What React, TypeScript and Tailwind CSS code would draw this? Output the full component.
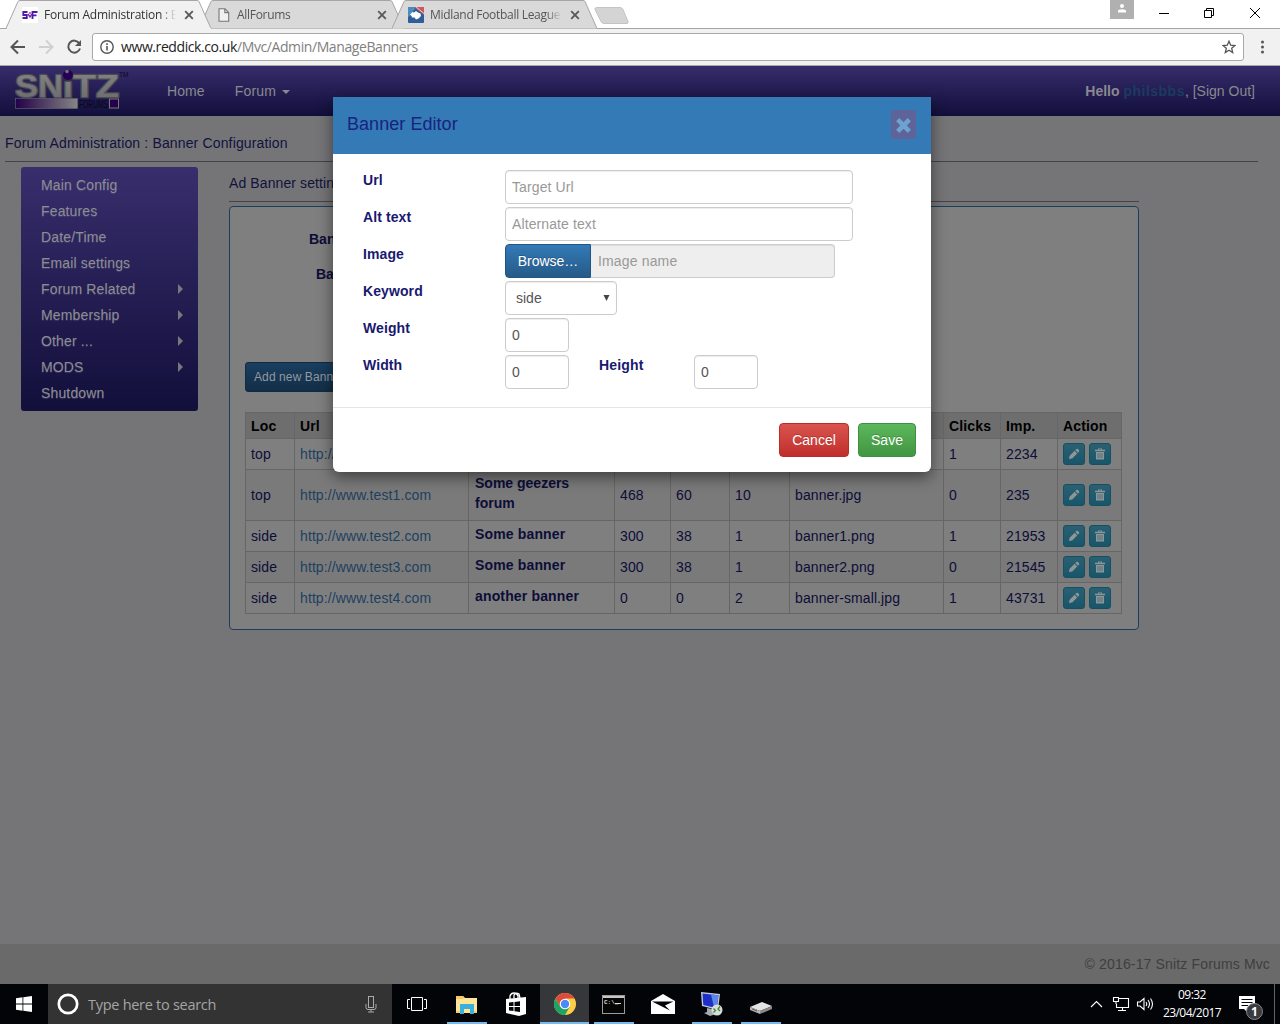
import React from "react";

const ARIAL = "font-['Liberation_Sans',sans-serif]";
const SEGOE = "font-['Open_Sans','Noto_Sans',sans-serif]";

function Tab({ active, title, titleClass, children }: { active?: boolean; title: string; titleClass: string; children: React.ReactNode }) {
  return (
    <div className={`relative h-[29px] w-[206px] shrink-0 -mr-[13px] ${active ? "z-30" : "z-10"}`}>
      <svg className="absolute inset-0" width="206" height="29" viewBox="0 0 206 29">
        <path d="M0 28.5 L12 1.5 Q13 .5 14 .5 H191 Q192 .5 193 1.5 L205 28.5" fill={active ? "#f2f1f2" : "#d9d9d9"} stroke="#a6a6a6" />
        {active && <path d="M1 28.5H205" stroke="#f2f1f2" strokeWidth="1.4" />}
      </svg>
      <div className="relative flex h-[29px] items-center pl-4">
        <div className="flex w-[22px] shrink-0 items-center">{children}</div>
        <div className={`h-[18px] w-[132px] overflow-hidden text-[12px] leading-[18px] whitespace-nowrap [mask-image:linear-gradient(to_right,black_88%,transparent)] ${SEGOE} ${titleClass}`}>{title}</div>
        <svg className="ml-2" width="10" height="10" viewBox="0 0 10 10">
          <path d="M1.200 1.200L8.800 8.800M8.800 1.200L1.200 8.800" stroke="#5a5a5a" strokeWidth="1.9" />
        </svg>
      </div>
    </div>
  );
}

function BrowserChrome() {
  return (
    <div className="h-[66px] shrink-0 bg-white">
      <div className="flex h-[29px] border-b border-[#a6a6a6] pl-[6px]">
        <Tab active title="Forum Administration : B" titleClass="text-[#333] tracking-[-0.24px]">
          <svg className="bg-white" width="16" height="16" viewBox="0 0 16 16" fill="none" stroke="#4a1aa8" strokeWidth="1.800">
            <path d="M5.500 5H1.300V8H4.800V11H.5M10.500 12V5H15.500M10.500 8.300H14.500" />
            <path d="M6 7L8 10L10 7" stroke="#7a2fc0" strokeWidth="1.500" />
            <circle cx="8" cy="6" r="1" fill="#d03a80" stroke="none" />
          </svg>
        </Tab>
        <Tab title="AllForums" titleClass="text-[#555] tracking-[-0.3px]">
          <svg className="ml-[3px]" width="12" height="14" viewBox="0 0 12 14">
            <path d="M1 .7H7L10.7 4.4V13.3H1ZM6.8 .7V4.6H10.7" fill="#f0f0f0" stroke="#777" strokeWidth="1.1" />
          </svg>
        </Tab>
        <Tab title="Midland Football League" titleClass="text-[#555] tracking-[-0.3px]">
          <svg width="16" height="16" viewBox="0 0 16 16">
            <rect width="16" height="16" rx="1" fill="#2e5f98" />
            <path d="M0 0H8L2 9L0 10Z" fill="#4b8dbd" />
            <path d="M6 0H16V8Z" fill="#c85a60" />
            <path d="M8 0L16 6.500" stroke="#eac9cb" />
            <path d="M2 7.500L4.500 5L6 5.500L8 4L10 5.500L12.500 6.500L13 9L10.500 11.500L8 12.500L6.500 10.500H4L3.500 9Z" fill="#fff" />
          </svg>
        </Tab>
        <svg className="ml-[9px] mt-[6px]" width="36" height="19" viewBox="0 0 36 19">
          <path d="M2.5 1.5H26Q28 1.5 29 3.5L34 15.5Q34.5 17.5 33 17.5H10Q8 17.5 7 15.5L1 3.5Q.5 1.5 2.5 1.5Z" fill="#d4d4d4" stroke="#c4c4c4" />
        </svg>
        <div className="ml-auto flex">
          <div className="flex h-[19px] w-6 justify-center bg-[#b0b0b0] pt-1">
            <svg width="10" height="9" viewBox="0 0 10 9"><circle cx="5" cy="2" r="2" fill="#fff" /><path d="M1 8.5V7Q1 5.3 5 5.3T9 7V8.5Z" fill="#fff" /></svg>
          </div>
          <svg className="mt-[7px]" width="146" height="14" viewBox="0 0 146 14" fill="none" stroke="#000">
            <path d="M25 6.5H35M70.5 3.500H77.500V10.500H70.500ZM72.500 3.500V1.500H79.500V8.500H77.500M116 1L126 11M126 1L116 11" />
          </svg>
        </div>
      </div>
      <div className="flex h-[37px] items-center border-b border-[#a8a8a8] bg-[#f2f1f2]">
        <svg className="ml-[9px] shrink-0" width="76" height="20" viewBox="0 0 76 20" fill="none" strokeWidth="2">
          <path d="M16 10H3M9 3.5L2.5 10L9 16.5" stroke="#555" />
          <path d="M30 10H43M37 3.5L43.5 10L37 16.5" stroke="#d0d0d0" />
          <path d="M70.3 6.3A6 6 0 1 0 71 11.5" stroke="#555" />
          <path d="M72 3V9H66Z" fill="#555" />
        </svg>
        <div className="ml-[7px] flex h-7 w-[1152px] shrink-0 items-center rounded-[3px] border border-[#a9a9a9] bg-white px-[7px]">
          <svg width="14" height="14" viewBox="0 0 14 14"><circle cx="7" cy="7" r="6.2" fill="none" stroke="#555" strokeWidth="1.4" /><path d="M7 6V10.5M7 3.3V4.9" stroke="#555" strokeWidth="1.6" /></svg>
          <div className={`ml-[7px] text-[14px] leading-5 tracking-[-0.41px] text-[#808080] ${SEGOE}`}><span className="text-[#222]">www.reddick.co.uk</span>/Mvc/Admin/ManageBanners</div>
          <svg className="ml-auto" width="14" height="14" viewBox="0 0 14 14"><path d="M7 1.2L8.7 5.2L13 5.5L9.7 8.3L10.7 12.6L7 10.3L3.3 12.6L4.3 8.3L1 5.5L5.3 5.2Z" fill="none" stroke="#555" strokeWidth="1.3" /></svg>
        </div>
        <svg className="ml-4" width="5" height="14" viewBox="0 0 5 14" fill="#555"><circle cx="2.5" cy="2" r="1.5" /><circle cx="2.5" cy="7" r="1.5" /><circle cx="2.5" cy="12" r="1.5" /></svg>
      </div>
    </div>
  );
}

function SnitzLogo() {
  return (
    <svg className="shrink-0" width="120" height="44" viewBox="0 0 120 44">
      <defs>
        <linearGradient id="bar"><stop stopColor="#230048" /><stop offset="1" stopColor="#858585" /></linearGradient>
        <linearGradient id="metal" x2="0" y2="1"><stop stopColor="#858587" /><stop offset="1" stopColor="#6a6a6e" /></linearGradient>
      </defs>
      <g fontFamily="Liberation Sans" fontWeight="bold" fontSize="32" fill="url(#metal)" stroke="#4c4c52" strokeWidth="2.500" paintOrder="stroke" strokeLinejoin="round">
        <text x="0" y="28" textLength="48" lengthAdjust="spacingAndGlyphs">SN</text>
        <text x="48" y="28" fontSize="28" textLength="10" lengthAdjust="spacingAndGlyphs">ı</text>
        <text x="58" y="28" textLength="46" lengthAdjust="spacingAndGlyphs">TZ</text>
      </g>
      <circle cx="53" cy="6" r="5" fill="#250050" />
      <circle cx="52" cy="2.500" r="1.800" fill="#77707f" />
      <rect x=".5" y="29.500" width="62" height="10" fill="url(#bar)" stroke="#6a6670" strokeWidth=".6" />
      <text x="64" y="39" fontFamily="Liberation Sans" fontSize="10.500" textLength="29" lengthAdjust="spacingAndGlyphs" fill="#08061c">FORUMS</text>
      <rect x="94.500" y="30" width="9" height="9" fill="#26004c" stroke="#777" />
      <text x="104" y="8" fontFamily="Liberation Sans" fontSize="6.500" fill="#0a0820">TM</text>
    </svg>
  );
}

const menu: [string, boolean][] = [
  ["Main Config", false], ["Features", false], ["Date/Time", false], ["Email settings", false],
  ["Forum Related", true], ["Membership", true], ["Other ...", true], ["MODS", true], ["Shutdown", false],
];

const rows = [
  { loc: "top", url: "http://www.test.com", alt: "", w: "", h: "", wt: "", img: "", clicks: "1", imp: "2234", tall: false },
  { loc: "top", url: "http://www.test1.com", alt: "Some geezers forum", w: "468", h: "60", wt: "10", img: "banner.jpg", clicks: "0", imp: "235", tall: true },
  { loc: "side", url: "http://www.test2.com", alt: "Some banner", w: "300", h: "38", wt: "1", img: "banner1.png", clicks: "1", imp: "21953", tall: false },
  { loc: "side", url: "http://www.test3.com", alt: "Some banner", w: "300", h: "38", wt: "1", img: "banner2.png", clicks: "0", imp: "21545", tall: false },
  { loc: "side", url: "http://www.test4.com", alt: "another banner", w: "0", h: "0", wt: "2", img: "banner-small.jpg", clicks: "1", imp: "43731", tall: false },
];

function ActionButton({ kind }: { kind: "edit" | "delete" }) {
  return (
    <div className="flex h-[22px] w-[22px] items-center justify-center rounded-[3px] border border-[#155064] bg-linear-to-b from-[#2a6072] to-[#18566a]">
      <svg width="12" height="12" viewBox="0 0 12 12" fill="#8e9698">
        {kind === "edit" ? (
          <path d="M1 11L1.600 7.800L6.600 2.800L9.200 5.400L4.200 10.400ZM7.300 2.100L8.300 1.100Q9.200 .4 9.900 1.100L10.900 2.100Q11.600 2.800 10.900 3.700L9.900 4.700Z" />
        ) : (
          <path fillRule="evenodd" d="M4 .5H8V1.800H11V3.200H1V1.800H4ZM5 1.200V1.800H7V1.200ZM2 4H10V11.500H2ZM3.700 5V10.300H4.300V5ZM5.700 5V10.300H6.300V5ZM7.700 5V10.300H8.300V5Z" />
        )}
      </svg>
    </div>
  );
}

function BannerTable() {
  const cell = "border border-[#666] pl-[5px] align-middle";
  return (
    <table className="w-[877px] table-fixed border-collapse text-[14px] leading-5 tracking-[0.1px] text-[#0d0d38]">
      <colgroup>
        <col className="w-[49px]" /><col className="w-[174px]" /><col className="w-[146px]" /><col className="w-[56px]" /><col className="w-[59px]" /><col className="w-[60px]" /><col className="w-[154px]" /><col className="w-[57px]" /><col className="w-[57px]" /><col className="w-[64px]" />
      </colgroup>
      <thead>
        <tr className="h-[26px] bg-[#6e6e6e] text-left font-bold text-black">
          {["Loc", "Url", "", "", "", "", "", "Clicks", "Imp.", "Action"].map((h, i) => (
            <th key={i} className={`${cell} tracking-[0.15px] whitespace-nowrap`}>{h}</th>
          ))}
        </tr>
      </thead>
      <tbody>
        {rows.map((r, i) => (
          <tr key={i} className={`${r.tall ? "h-[51px]" : "h-[31px]"} ${i % 2 ? "bg-[#7a7a7a]" : "bg-[#7f7f7f]"}`}>
            <td className={cell}>{r.loc}</td>
            <td className={`${cell} text-[#1d405f]`}>{r.url}</td>
            <td className={`${cell} font-bold`}><div className={`pr-9 pb-1 pl-px ${r.tall ? "tracking-[0]" : "tracking-[0.15px] whitespace-nowrap"}`}>{r.alt}</div></td>
            <td className={cell}>{r.w}</td>
            <td className={cell}>{r.h}</td>
            <td className={cell}>{r.wt}</td>
            <td className={cell}>{r.img}</td>
            <td className={cell}>{r.clicks}</td>
            <td className={cell}>{r.imp}</td>
            <td className={cell}><div className="flex gap-1"><ActionButton kind="edit" /><ActionButton kind="delete" /></div></td>
          </tr>
        ))}
      </tbody>
    </table>
  );
}

const inputBox = "flex h-[34px] items-center rounded-[4px] border border-[#ccc] bg-white px-[6px] text-[14px] shadow-[inset_0_1px_1px_rgba(0,0,0,0.075)]";

function Row({ label, children }: { label: string; children: React.ReactNode }) {
  return (
    <div className="flex h-[37px] items-start">
      <div className="w-[142px] shrink-0 text-[14px] leading-5 font-bold tracking-[0.1px]">{label}</div>
      {children}
    </div>
  );
}

function BannerEditor() {
  return (
    <div className="absolute top-[31px] left-[333px] flex h-[375px] w-[598px] flex-col overflow-visible rounded-b-[6px] bg-white text-[#191970] shadow-[0_5px_15px_rgba(0,0,0,0.5)]">
      <div className="flex h-[57px] items-start justify-between bg-[#337ab7] pr-[15px] pl-[14px]">
        <div className="mt-[14px] text-[18px] leading-[26px] tracking-[0.05px] text-[#1a237e]">Banner Editor</div>
        <div className="mt-[13px] flex h-[29px] w-[25px] items-center justify-center rounded-[3px] bg-[#5e6499]">
          <svg className="mt-[2px]" width="17" height="17" viewBox="0 0 17 17"><path d="M3.600 3.600L13.400 13.400M13.400 3.600L3.600 13.400" stroke="#6da3d0" strokeWidth="5.400" strokeLinecap="square" strokeLinejoin="round" transform="translate(1.300 1.300) scale(.85)" /></svg>
        </div>
      </div>
      <div className="flex h-[253px] flex-col pt-4 pl-[30px]">
        <Row label="Url"><div className={`${inputBox} w-[348px] tracking-[0.1px] text-[#999]`}>Target Url</div></Row>
        <Row label="Alt text"><div className={`${inputBox} w-[348px] tracking-[0.1px] text-[#999]`}>Alternate text</div></Row>
        <Row label="Image">
          <div className="flex h-[34px] w-[86px] items-center justify-center rounded-l-[4px] border border-[#245580] bg-linear-to-b from-[#337ab7] to-[#265a88] text-[14px] text-white [text-shadow:0_-1px_0_rgba(0,0,0,0.2)]">Browse…</div>
          <div className="flex h-[34px] w-[244px] items-center rounded-r-[4px] border border-l-0 border-[#ccc] bg-[#eee] px-[7px] text-[14px] tracking-[0.15px] text-[#999] shadow-[inset_0_1px_1px_rgba(0,0,0,0.075)]">Image name</div>
        </Row>
        <Row label="Keyword">
          <div className={`${inputBox} w-[112px] justify-between pl-[10px] text-[#555]`}>side
            <svg width="7" height="8" viewBox="0 0 7 8"><path d="M.5 1H6.500L3.500 7Z" fill="#444" /></svg>
          </div>
        </Row>
        <Row label="Weight"><div className={`${inputBox} w-16 text-[#555]`}>0</div></Row>
        <Row label="Width">
          <div className={`${inputBox} w-16 text-[#555]`}>0</div>
          <div className="ml-[30px] w-[95px] text-[14px] leading-5 font-bold tracking-[0.15px]">Height</div>
          <div className={`${inputBox} w-16 text-[#555]`}>0</div>
        </Row>
      </div>
      <div className="flex flex-1 justify-end gap-[9px] border-t border-[#e5e5e5] pt-[15px] pr-[15px] text-[14px] text-white [text-shadow:0_-1px_0_rgba(0,0,0,0.2)]">
        <div className="flex h-[34px] w-[70px] items-center justify-center rounded-[4px] border border-[#b92c28] bg-linear-to-b from-[#d9534f] to-[#c12e2a]">Cancel</div>
        <div className="flex h-[34px] w-[58px] items-center justify-center rounded-[4px] border border-[#3e8f3e] bg-linear-to-b from-[#5cb85c] to-[#419641]">Save</div>
      </div>
    </div>
  );
}

function ForumPage() {
  return (
    <div className={`relative flex h-[918px] shrink-0 flex-col bg-[#757578] text-[14px] text-[#12123c] ${ARIAL}`}>
      <div className="flex h-[50px] shrink-0 items-center bg-linear-to-b from-[#372c6b] to-[#120f3c] pr-[25px] pl-[15px] text-[#89898f]">
        <SnitzLogo />
        <div className="ml-8 tracking-[0.1px]">Home</div>
        <div className="ml-[30px] tracking-[0.2px]">Forum</div>
        <svg className="ml-[6px] mt-[2px]" width="8" height="4"><path d="M0 0H8L4 4Z" fill="#89898f" /></svg>
        <div className="ml-auto"><b>Hello</b> <b className="tracking-[0.5px] text-[#1b3b61]">philsbbs</b>, [Sign Out]</div>
      </div>
      <div className="ml-[5px] h-[46px] w-[1253px] shrink-0 border-b border-[#444448] pt-[17px] leading-5 tracking-[0.15px]">Forum Administration : Banner Configuration</div>
      <div className="flex flex-1 items-start pt-[5px]">
        <div className="ml-[21px] h-[244px] w-[177px] rounded-[3px] bg-linear-to-b from-[#392e6d] to-[#120f3b] pt-[5px] pr-[15px] pl-5 tracking-[0.15px] text-[#8c8c92] [text-shadow:0_1px_1px_rgba(120,120,150,0.35)]">
          {menu.map(([name, sub]) => (
            <div key={name} className="flex h-[26px] items-center justify-between">{name}
              {sub && <svg width="5" height="10"><path d="M0 0L5 5L0 10Z" fill="#77777d" /></svg>}
            </div>
          ))}
        </div>
        <div className="ml-[31px] w-[910px]">
          <div className="h-[35px] border-b border-[#444448] pt-[6px] leading-5 tracking-[0.1px]">Ad Banner settings</div>
          <div className="mt-1 h-[424px] rounded-[4px] border border-[#1b3e5d] bg-[#7f7f7f] pl-[15px]">
            <div className="flex h-[155px] flex-col gap-[15px] pt-[22px] text-[14px] leading-5 font-bold text-[#0c0c38]">
              <div className="pl-16">Banner</div>
              <div className="pl-[71px]">Banner</div>
            </div>
            <div className="mb-5 flex h-[30px] w-[120px] items-center rounded-[3px] border border-[#122b40] bg-linear-to-b from-[#1a3f60] to-[#132e47] pl-2 text-[12px] tracking-[0.1px] text-[#93999f]">Add new Banner</div>
            <BannerTable />
          </div>
        </div>
      </div>
      <div className="h-10 shrink-0 bg-[#6a6a6a] pt-[10px] pr-[10px] text-right leading-5 tracking-[0.15px] text-[#3e3e41]">© 2016-17 Snitz Forums Mvc</div>
      <BannerEditor />
    </div>
  );
}

function Task({ line, active, children }: { line?: boolean; active?: boolean; children?: React.ReactNode }) {
  return (
    <div className="flex h-10 w-[49px] shrink-0 flex-col items-center">
      <div className={`flex h-[38px] w-full items-center justify-center pt-[2px] ${active ? "bg-[#35373b]" : ""}`}>{children}</div>
      <div className={`h-[2px] ${active ? "w-full" : "w-10"} ${line ? "bg-[#76b9ed]" : ""}`} />
    </div>
  );
}

function Taskbar() {
  return (
    <div className={`flex h-10 shrink-0 bg-[#020408] text-white ${SEGOE}`}>
      <div className="flex w-12 shrink-0 items-center justify-center">
        <svg width="16" height="16" viewBox="0 0 16 16" fill="#fff"><path d="M0 2.300L6.500 1.300V7.600H0ZM7.300 1.200L16 0V7.600H7.300ZM0 8.400H6.500V14.700L0 13.700ZM7.300 8.400H16V16L7.300 14.800Z" /></svg>
      </div>
      <div className="mr-px flex w-[344px] shrink-0 items-center bg-[#333] pr-[14px] pl-[9px]">
        <svg width="22" height="22" viewBox="0 0 22 22"><circle cx="11" cy="11" r="9.200" fill="none" stroke="#fff" strokeWidth="2.700" /></svg>
        <div className="mt-px ml-[9px] text-[14.500px] tracking-[-0.28px] text-[#a5a5a5]">Type here to search</div>
        <svg className="ml-auto" width="13" height="17" viewBox="0 0 13 17" fill="none" stroke="#aaa"><rect x="3.500" y=".5" width="5" height="11" /><path d="M1 8V11.500Q1 13.500 3 13.500H9Q11 13.500 11 11.500V8M6 13.500V16M3 16H9" /></svg>
      </div>
      <Task><svg className="-ml-[2px]" width="20" height="14" viewBox="0 0 20 14" fill="none" stroke="#fff"><path d="M4.500 .5H15.500V13.500H4.500ZM3 2.500H.5V11.500H3M17 2.500H19.500V11.500H17" /></svg></Task>
      <Task line>
        <svg width="22" height="19" viewBox="0 0 22 19"><path d="M0 1H7L9 3H21V18H0Z" fill="#ffe599" /><path d="M0 1H7L8.500 3L7 4H0Z" fill="#f4cd62" /><path d="M4 9H18V19H14V14H8V19H4Z" fill="#3cb0dc" /><path d="M0 16H4V18H0M18 16H21V18H18Z" fill="#f5cf69" /></svg>
      </Task>
      <Task>
        <svg width="22" height="24" viewBox="0 0 22 24"><path d="M1 7L21 5V22L14 24L1 21Z" fill="#fff" /><path d="M5 8V4Q6 1 9 1T13 4V8M9 6V3Q11 0 14 2L15 6" fill="none" stroke="#fff" strokeWidth="1.300" /><path d="M4 10.500L8.500 10V14H4ZM9.500 10L15 9.200V14H9.500ZM4 15H8.500V19L4 18.500ZM9.500 15H15V20L9.500 19.200Z" fill="#020408" /></svg>
      </Task>
      <Task line active>
        <svg width="22" height="22" viewBox="0 0 22 22"><circle cx="11" cy="11" r="11" fill="#ffce44" /><path d="M1.500 5.500A11 11 0 0 1 20.530 5.500H11L6.240 13.750Z" fill="#dd4b3e" /><path d="M1.470 5.500A11 11 0 0 0 11 22L15.760 13.750H6.240Z" fill="#1da462" /><circle cx="11" cy="11" r="5.300" fill="#fff" /><circle cx="11" cy="11" r="4.200" fill="#4a8af4" /></svg>
      </Task>
      <Task line>
        <svg width="23" height="19" viewBox="0 0 23 19"><rect x=".5" y=".5" width="22" height="18" fill="#050505" stroke="#9a9a9a" /><rect x="1" y="1" width="21" height="2" fill="#c5c5c5" /><text x="2" y="9" fontFamily="Liberation Mono" fontSize="6" fontWeight="bold" fill="#ddd">C:\_</text><path d="M13 8.500H19" stroke="#ddd" /></svg>
      </Task>
      <Task>
        <svg width="24" height="20" viewBox="0 0 24 20"><path d="M0 7L12 0L24 7V20H0Z" fill="#fff" /><path d="M1 7.500H22.500L14 11.500L19 16.500Z" fill="#020408" /></svg>
      </Task>
      <Task line>
        <svg width="24" height="24" viewBox="0 0 24 24"><path d="M1 0L20 2L18 18L2 14Z" fill="#c3ccda" /><path d="M2.500 1.500L18.500 3.200L16.800 16.300L3.300 13Z" fill="#1c30c8" /><path d="M11 2.400L18.500 3.200L16.800 16.300L14 15.600Z" fill="#5d86e6" /><path d="M7 16L12 17V20L16 22L10 24L4 21L7 20Z" fill="#a5aaae" /><circle cx="17" cy="18" r="5.500" fill="#d9ddd9" /><path d="M13.500 16.500L15.500 18.500L13.500 20.500M20 14.500L18 17L20 19" fill="none" stroke="#3a8a3c" strokeWidth="1.300" /></svg>
      </Task>
      <Task line>
        <svg className="mt-2" width="22" height="12" viewBox="0 0 22 12"><path d="M0 5L12 0L22 4L10 9Z" fill="#e4e4e4" /><path d="M0 5L10 9V12L0 8Z" fill="#b5b5b5" /><path d="M10 9L22 4V7L10 12Z" fill="#8a8a8a" /><path d="M2 7L7 9" stroke="#555" /></svg>
      </Task>
      <div className="ml-auto flex items-center">
        <svg width="64" height="18" viewBox="0 0 64 18" fill="none" stroke="#fff" strokeWidth="1.100">
          <path d="M1 12L6.500 6.500L12 12" />
          <path d="M28 3.500H38.500V12.500H26.500V9M32.500 12.500V15.500M28 15.500H36M23.500 2.500H28.500V6.500H23.500ZM26 6.500V9" />
          <path d="M47.500 7H50L54 3.500V14.500L50 11H47.500ZM56 7Q57.500 9 56 11M58 5Q61 9 58 13M60.500 3.500Q64.500 9 60.500 14.500" />
        </svg>
        <div className="ml-[8px] flex w-[60px] flex-col items-center text-[12px] leading-[18px] tracking-[-0.55px] whitespace-nowrap"><span>09:32</span><span>23/04/2017</span></div>
        <svg className="mt-[7px] ml-[17px]" width="26" height="27" viewBox="0 0 26 27"><path d="M0 2H16V15H9V19L5 15H0Z" fill="#fff" /><path d="M2.500 5.500H13.500M2.500 8.500H13.500M2.500 11.500H9" stroke="#020408" /><circle cx="15.500" cy="17.500" r="8" fill="#3a3b3e" stroke="#85878a" /><text x="15.500" y="22" textAnchor="middle" fontFamily="Open Sans" fontSize="12" fontWeight="bold" fill="#fff">1</text></svg>
        <div className="ml-[9px] h-10 w-px bg-[#60636a]" />
        <div className="w-[5px]" />
      </div>
    </div>
  );
}

export default function App() {
  return (
    <div className="flex h-[1024px] w-[1280px] flex-col overflow-hidden">
      <BrowserChrome />
      <ForumPage />
      <Taskbar />
    </div>
  );
}
